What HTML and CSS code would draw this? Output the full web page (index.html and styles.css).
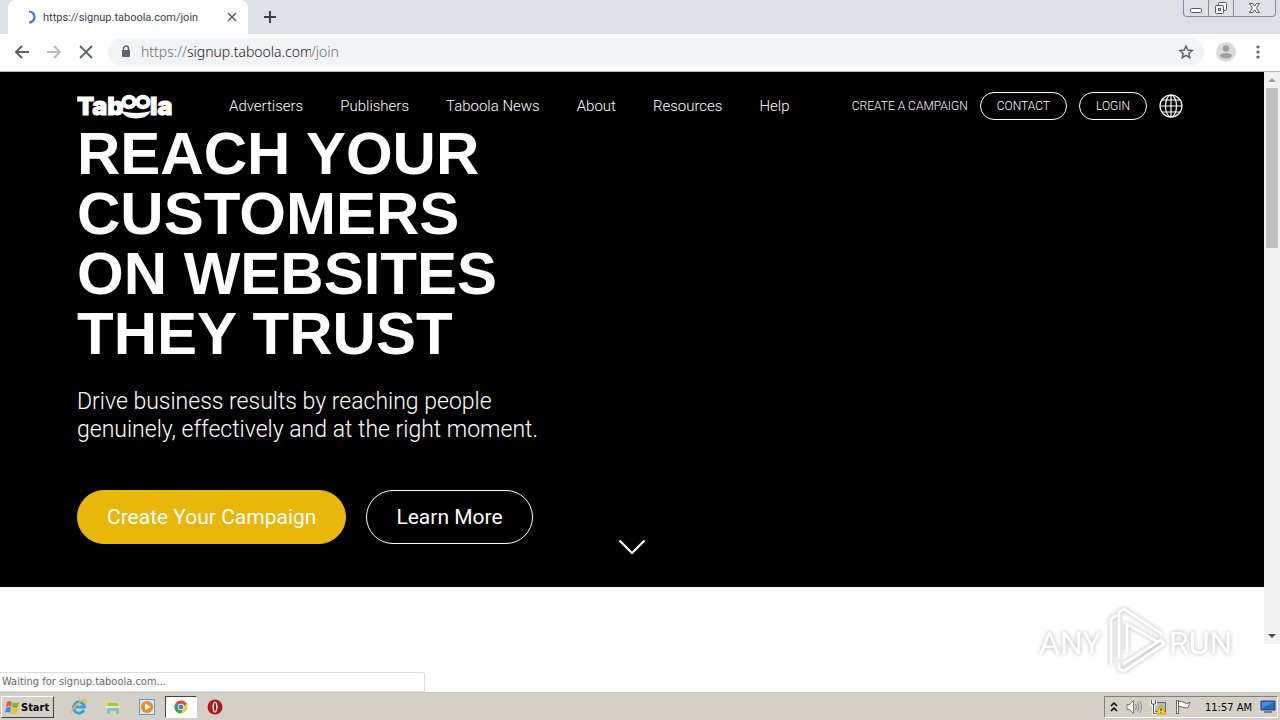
FILE: index.html
```html
<!DOCTYPE html>
<html lang="en">
<head>
    <meta charset="UTF-8">
    <meta name="viewport" content="width=device-width, initial-scale=1.0">
    <title>Taboola</title>
    <link rel="stylesheet" href="styles.css">
</head>
<body>
    <header class="tabstrip">
        <div class="tab">
            <svg class="spinner" width="14" height="14" viewBox="0 0 14 14"><path d="M7 1.500a5.500 5.500 0 0 1 0 11" fill="none" stroke="#3b78e7" stroke-width="2.200"/></svg>
            <span class="tab-title">https://signup.taboola.com/join</span>
            <button class="icon-btn" aria-label="Close tab"><svg width="10" height="10" viewBox="0 0 10 10"><path d="M1 1l8 8M9 1L1 9" stroke="#5f6368" stroke-width="1.6"/></svg></button>
        </div>
        <button class="icon-btn new-tab" aria-label="New tab"><svg width="12" height="12" viewBox="0 0 12 12"><path d="M6 0v12M0 6h12" stroke="#3c4043" stroke-width="2"/></svg></button>
        <div class="window-controls">
            <button aria-label="Minimize"><svg width="24" height="16" viewBox="0 0 24 16"><rect x="6.500" y="8.500" width="11" height="4" rx="1" fill="#fff" stroke="#555b66"/></svg></button>
            <button aria-label="Restore"><svg width="24" height="16" viewBox="0 0 24 16"><g fill="#f4f5f7" stroke="#555b66"><rect x="9.500" y="2.500" width="8" height="8" rx="1"/><rect x="6.500" y="5.500" width="8" height="8" rx="1"/><rect x="9.500" y="8.500" width="2" height="2"/></g></svg></button>
            <button class="win-close" aria-label="Close"><svg width="41" height="16" viewBox="0 0 41 16"><path d="M15.500 3.500h3l2 2.500 2-2.500h3L22.500 8l3 4.500h-3l-2-2.500-2 2.500h-3l3-4.500z" fill="#f4f5f7" stroke="#555b66"/></svg></button>
        </div>
    </header>

    <div class="toolbar">
        <button class="icon-btn" aria-label="Back"><svg width="16" height="16" viewBox="0 0 16 16"><path d="M15 8H2M8 2L2 8l6 6" fill="none" stroke="#5f6368" stroke-width="2"/></svg></button>
        <button class="icon-btn" aria-label="Forward"><svg width="16" height="16" viewBox="0 0 16 16"><path d="M1 8h13M8 2l6 6-6 6" fill="none" stroke="#babcbe" stroke-width="2"/></svg></button>
        <button class="icon-btn" aria-label="Stop"><svg width="16" height="16" viewBox="0 0 16 16"><path d="M2 2l12 12M14 2L2 14" stroke="#5f6368" stroke-width="1.800"/></svg></button>
        <div class="omnibox">
            <svg width="10" height="13" viewBox="0 0 10 13"><rect x="1" y="5" width="8" height="7" rx="1" fill="#5f6368"/><path d="M2.500 6V3.500a2.500 2.500 0 0 1 5 0V6" fill="none" stroke="#5f6368" stroke-width="1.500"/></svg>
            <div class="url">
                <span>https://</span><input type="text" aria-label="Address" value="signup.taboola.com"><span>/join</span>
            </div>
            <button class="icon-btn" aria-label="Bookmark"><svg width="16" height="16" viewBox="0 0 16 16"><path d="M8 2l1.700 4.100 4.400.400-3.300 2.900 1 4.300L8 11.400l-3.800 2.300 1-4.300L1.900 6.500l4.400-.400z" fill="none" stroke="#5f6368" stroke-width="1.500"/></svg></button>
        </div>
        <button class="icon-btn profile" aria-label="Profile"><svg width="20" height="20" viewBox="0 0 20 20"><circle cx="10" cy="10" r="10" fill="#dcdcdc"/><circle cx="10" cy="6.500" r="3.200" fill="#a0a0a0"/><ellipse cx="10" cy="13.800" rx="6" ry="2.800" fill="#a0a0a0"/></svg></button>
        <button class="icon-btn" aria-label="Menu"><svg width="4" height="14" viewBox="0 0 4 14" fill="#5f6368"><circle cx="2" cy="2" r="1.600"/><circle cx="2" cy="7" r="1.600"/><circle cx="2" cy="12" r="1.600"/></svg></button>
    </div>

    <div class="viewport">
        <main class="page">
            <section class="hero">
                <nav class="site-nav">
                    <a href="#" class="logo" aria-label="Taboola">
                        <svg width="96" height="28" viewBox="0 0 96 28" fill="#fff">
                            <text x="0" y="23" class="logo-text">Tab</text>
                            <g fill="none" stroke="#fff">
                                <ellipse cx="52" cy="10" rx="5.500" ry="5" stroke-width="4.500"/>
                                <ellipse cx="66" cy="10" rx="5.500" ry="5" stroke-width="4.500"/>
                            </g>
                            <path d="M44 19q16 4 30 0q-4 7.500-15 7.500T44 19z"/>
                            <text x="73" y="23" class="logo-text">la</text>
                        </svg>
                    </a>
                    <div class="menu">
                        <a href="#">Advertisers</a>
                        <a href="#">Publishers</a>
                        <a href="#">Taboola News</a>
                        <a href="#">About</a>
                        <a href="#">Resources</a>
                        <a href="#">Help</a>
                    </div>
                    <div class="actions">
                        <a href="#">CREATE A CAMPAIGN</a>
                        <a href="#" class="pill">CONTACT</a>
                        <a href="#" class="pill">LOGIN</a>
                        <button class="icon-btn" aria-label="Language"><svg width="24" height="24" viewBox="0 0 24 24" fill="none" stroke="#fff" stroke-width="1.200"><circle cx="12" cy="12" r="11"/><ellipse cx="12" cy="12" rx="5.500" ry="11"/><path d="M12 1v22M1 12h22M3 6h18M3 18h18"/></svg></button>
                    </div>
                </nav>
                <div class="hero-body">
                    <h1>REACH YOUR<br>CUSTOMERS<br>ON WEBSITES<br>THEY TRUST</h1>
                    <p>Drive business results by reaching people<br>genuinely, effectively and at the right moment.</p>
                    <div class="cta">
                        <a href="#" class="btn btn-yellow">Create Your Campaign</a>
                        <a href="#" class="btn">Learn More</a>
                    </div>
                </div>
                <a href="#more" class="scroll-down" aria-label="Scroll down"><svg width="28" height="16" viewBox="0 0 28 16"><path d="M1.500 1.500L14 14 26.500 1.500" fill="none" stroke="#fff" stroke-width="2.200"/></svg></a>
            </section>
        </main>
        <div class="scrollbar">
            <button aria-label="Scroll up"><svg width="8" height="4" viewBox="0 0 8 4"><path d="M0 4l4-4 4 4z" fill="#a3a3a3"/></svg></button>
            <div class="thumb"></div>
            <button aria-label="Scroll down"><svg width="8" height="4" viewBox="0 0 8 4"><path d="M0 0l4 4 4-4z" fill="#505050"/></svg></button>
        </div>

        <div class="status">Waiting for signup.taboola.com...</div>

        <svg class="watermark" width="200" height="70" viewBox="0 0 200 70">
            <text x="3" y="49" class="wm-text">ANY</text>
            <path d="M75 60V14l6-4M83 54V7l5-3 38 25M83 58v6l5 2 40-27-3-4-38 24M91 47V19l31 18" fill="none" stroke="#fff" stroke-width="3" stroke-linejoin="round"/>
            <text x="133" y="49" class="wm-text">RUN</text>
        </svg>
    </div>

    <footer class="taskbar">
        <button class="start">
            <svg width="16" height="15" viewBox="0 0 16 15"><path d="M3 2q3-2 5 0L7 7Q5 5 2 7z" fill="#e8612c"/><path d="M9 2q3 2 6 0l-1 5q-3 2-6 0z" fill="#7db72f"/><path d="M2 8q3-2 5 0l-1 5q-3-2-5 0z" fill="#3d8fdc"/><path d="M8 8q3 2 6 0l-1 5q-3 2-6 0z" fill="#f5bd20"/></svg>
            Start
        </button>
        <div class="quick">
            <button aria-label="Internet Explorer"><svg width="18" height="18" viewBox="0 0 18 18" fill="none"><path d="M14 12a5.500 5.500 0 1 1 .500-3H5" stroke="#36a3df" stroke-width="3"/><path d="M2 16C-1 13 12 0 16 2q1 1-1 4" stroke="#e9bd3c" stroke-width="1.500"/></svg></button>
            <button aria-label="Explorer"><svg width="18" height="18" viewBox="0 0 18 18"><path d="M2 2h6l1 2h7v12H2z" fill="#efd478"/><path d="M4 5h10v4H4z" fill="#8fc875"/><path d="M2 8h14v3H2z" fill="#f8e8a3"/><path d="M3 10h12v6h-3v-3H6v3H3z" fill="#79bfe6"/></svg></button>
            <button aria-label="Media Player"><svg width="18" height="18" viewBox="0 0 18 18"><rect x="1.500" y="1.500" width="15" height="15" fill="#d2e7f7" stroke="#5a9bd0"/><circle cx="9" cy="9" r="6" fill="#f38a1d"/><path d="M7 5.500l6 3.500-6 3.500z" fill="#fff"/></svg></button>
            <button class="active" aria-label="Chrome"><svg width="14" height="14" viewBox="0 0 14 14"><circle cx="7" cy="7" r="6.500" fill="#f6c935"/><path d="M7 7L1.400 3.700A6.500 6.500 0 0 1 12.600 3.700L10 6z" fill="#df4a3b"/><path d="M7 7L1.400 3.700A6.500 6.500 0 0 0 6.500 13.500L9 9z" fill="#38a056"/><circle cx="7" cy="7" r="3.200" fill="#fff"/><circle cx="7" cy="7" r="2.500" fill="#4384ee"/></svg></button>
            <button aria-label="Opera"><svg width="16" height="16" viewBox="0 0 16 16"><circle cx="8" cy="8" r="7.500" fill="#b5161c"/><ellipse cx="8" cy="8" rx="2.500" ry="5.500" fill="#fff"/><ellipse cx="8" cy="8" rx="1" ry="4.500" fill="#9d1015"/></svg></button>
        </div>
        <div class="tray">
            <svg width="8" height="10" viewBox="0 0 8 10"><path d="M1 4l3-3 3 3M1 9l3-3 3 3" fill="none" stroke="#000" stroke-width="1.500"/></svg>
            <svg width="16" height="16" viewBox="0 0 16 16"><path d="M1 5.500h2.500l4-4v13l-4-4H1z" fill="#fff" stroke="#777"/><path d="M9.500 5q2 3 0 6M11.500 3.500q3 4.500 0 9M13.500 2q4 6 0 12" fill="none" stroke="#888"/></svg>
            <svg width="17" height="16" viewBox="0 0 17 16"><rect x="4.500" y="3.500" width="11" height="9" fill="#b9bec5" stroke="#666"/><path d="M1.500 1v4h4V1M3.500 5v9.500h5" fill="none" stroke="#fff" stroke-width="3"/><path d="M1.500 1v4h4V1M3.500 5v9.500h5" fill="none" stroke="#555"/><path d="M11 6l5 9H6z" fill="#ffd91f" stroke="#c79b00"/><path d="M11 9v3M11 13v1" stroke="#222"/></svg>
            <svg width="17" height="16" viewBox="0 0 17 16"><path d="M3.500 2.500q3-1 5.500 1t6 0l-2 5q-2 1-4 0t-5.500-1z" fill="#fff" stroke="#666"/><path d="M2.500 1v14" stroke="#666" stroke-width="3"/><path d="M2.500 2v12" stroke="#fff"/></svg>
            <time>11:57 AM</time>
            <svg width="16" height="14" viewBox="0 0 16 14"><path d="M1 1h14v9H1z" fill="#2269bd" stroke="#17498a"/><path d="M2 2h12L2 8z" fill="#4c91d8"/><path d="M4 12h8" stroke="#77838f" stroke-width="2"/></svg>
        </div>
    </footer>
</body>
</html>
```
FILE: styles.css
```css
* { box-sizing: border-box; }
html, body {
    height: 100%;
    margin: 0;
    padding: 0;
}
body {
    display: flex;
    flex-direction: column;
    background: #fff;
    font-family: "DejaVu Sans Condensed", "DejaVu Sans", sans-serif;
    font-size: 11px;
    overflow: hidden;
}
a { color: inherit; text-decoration: none; }
button {
    border: none;
    padding: 0;
    background: none;
    font-family: inherit;
    cursor: pointer;
}
svg { display: block; flex: none; }

/* browser */
.tabstrip {
    display: flex;
    height: 34px;
    padding-left: 8px;
    background: #dee1e6;
}
.tab {
    display: flex;
    align-items: center;
    width: 240px;
    padding: 0 11px 0 14px;
    gap: 7px;
    background: #fff;
    border-radius: 8px 8px 0 0;
    color: #3c4043;
}
.tab-title {
    flex: 1;
    font-family: Roboto, sans-serif;
    white-space: nowrap;
}
.icon-btn { display: flex; align-items: center; }
.new-tab { margin-left: 16px; }
.window-controls {
    display: flex;
    height: 17px;
    margin-left: auto;
    margin-right: 4px;
    border: 1px solid #878c96;
    border-top: none;
    border-radius: 0 0 4px 4px;
}
.window-controls button + button { border-left: 1px solid #878c96; }
.toolbar {
    display: flex;
    align-items: center;
    gap: 16px;
    height: 38px;
    padding: 0 20px 2px 14px;
    border-bottom: 1px solid #b6b8bb;
}
.omnibox {
    flex: 1;
    display: flex;
    align-items: center;
    gap: 10px;
    height: 28px;
    margin: 0 -4px 0 -2px;
    padding: 0 10px 0 13px;
    border-radius: 14px;
    background: #f1f3f4;
}
.url {
    flex: 1;
    display: flex;
    align-items: center;
    font-family: "Noto Sans", sans-serif;
    font-size: 14px;
    font-weight: 300;
    color: #6b7075;
}
.url input {
    width: 124px;
    padding: 0;
    border: none;
    outline: none;
    background: none;
    font: inherit;
    color: #202124;
}
.profile { margin-right: 4px; }

/* page */
.viewport {
    position: relative;
    flex: 1;
    display: flex;
    min-height: 0;
}
.page { flex: 1; }
.hero {
    padding: 20px 77px 32px;
    background: #000;
    color: #fff;
    font-family: "Liberation Sans", sans-serif;
}
.site-nav {
    display: flex;
    align-items: center;
    height: 28px;
    padding-right: 4px;
    font-family: Roboto, "Liberation Sans", sans-serif;
    font-weight: 300;
}
.logo-text {
    font-family: Inter, "Liberation Sans", sans-serif;
    font-size: 25px;
    font-weight: 900;
    stroke: #fff;
    stroke-width: 1px;
}
.menu {
    display: flex;
    gap: 37px;
    margin-left: 56px;
    font-size: 15px;
    white-space: nowrap;
}
.actions {
    display: flex;
    align-items: center;
    gap: 12px;
    margin-left: auto;
    font-size: 12px;
    white-space: nowrap;
}
.pill {
    padding: 0 16px;
    border: 1px solid #fff;
    border-radius: 14px;
    line-height: 26px;
}
.hero-body { padding-top: 4px; }
h1 {
    margin: 0;
    font-size: 60px;
    line-height: 60px;
}
.hero p {
    margin: 24px 0 46px;
    font-family: Roboto, "Liberation Sans", sans-serif;
    font-size: 23px;
    font-weight: 300;
    line-height: 28px;
}
.cta { display: flex; gap: 20px; }
.btn {
    padding: 0 29px;
    border: 1px solid #fff;
    border-radius: 27px;
    font-family: Roboto, "Liberation Sans", sans-serif;
    font-size: 21px;
    font-weight: 400;
    line-height: 52px;
}
.btn-yellow { border-color: #e9b60a; background: #e9b60a; }
.scroll-down {
    display: flex;
    justify-content: center;
    margin-top: -5px;
}
.scrollbar {
    display: flex;
    flex-direction: column;
    width: 16px;
    margin-bottom: 48px;
    background: #f1f1f1;
}
.scrollbar button {
    display: flex;
    align-items: center;
    justify-content: center;
    height: 16px;
}
.scrollbar button:last-child { margin-top: auto; }
.thumb {
    height: 160px;
    margin: 0 2px;
    background: #c1c1c1;
}
.status {
    position: absolute;
    left: 0;
    bottom: 0;
    width: 425px;
    padding: 0 2px;
    border: 1px solid #dcdcdc;
    border-left: none;
    border-radius: 0 3px 0 0;
    background: #fff;
    line-height: 18px;
    color: #666;
}
.watermark {
    position: absolute;
    right: 44px;
    bottom: 17px;
    filter: drop-shadow(0 0 2px rgba(0, 0, 0, .3));
}
.wm-text {
    font-family: Roboto, "Liberation Sans", sans-serif;
    font-size: 32px;
    fill: #fff;
}

/* taskbar */
.taskbar {
    display: flex;
    align-items: center;
    height: 28px;
    padding: 1px 2px 0 1px;
    border-top: 1px solid #c8c4bc;
    background: #d4d0c8;
}
.start {
    display: flex;
    align-items: center;
    gap: 1px;
    height: 22px;
    padding: 0 4px 0 2px;
    border: 1px solid;
    border-color: #fff #404040 #404040 #fff;
    font-size: 11px;
    font-weight: bold;
}
.quick {
    display: flex;
    margin-left: 9px;
    gap: 2px;
}
.quick button {
    display: flex;
    align-items: center;
    justify-content: center;
    width: 32px;
    height: 22px;
}
.quick .active {
    border: 1px solid;
    border-color: #404040 #fff #fff #404040;
    background: #fff;
}
.tray {
    display: flex;
    align-items: center;
    gap: 8px;
    height: 22px;
    margin-left: auto;
    padding: 0 1px 0 5px;
    border: 1px solid;
    border-color: #808080 #fff #fff #808080;
}
.tray time { padding-left: 5px; }
```
